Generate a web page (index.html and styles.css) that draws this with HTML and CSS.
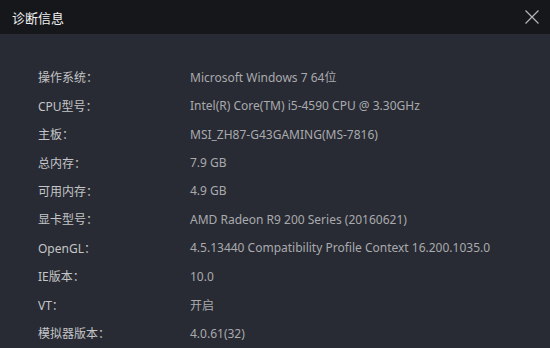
FILE: index.html
```html
<!DOCTYPE html>
<html lang="zh-CN">
<head>
<meta charset="utf-8">
<link rel="stylesheet" href="styles.css">
</head>
<body>
<div class="dialog">
  <div class="header">
    <span class="title">诊断信息</span>
    <svg class="close" width="14" height="14" viewBox="0 0 14 14"><path d="M0.5 0.5 L13.5 13.5 M13.5 0.5 L0.5 13.5" stroke="#b4b6bb" stroke-width="1.2" fill="none"/></svg>
  </div>
  <div class="content">
    <div class="row"><span class="label">操作系统：</span><span class="value">Microsoft Windows 7 64位</span></div>
    <div class="row"><span class="label">CPU型号：</span><span class="value">Intel(R) Core(TM) i5-4590 CPU @ 3.30GHz</span></div>
    <div class="row"><span class="label">主板：</span><span class="value">MSI_ZH87-G43GAMING(MS-7816)</span></div>
    <div class="row"><span class="label">总内存：</span><span class="value">7.9 GB</span></div>
    <div class="row"><span class="label">可用内存：</span><span class="value">4.9 GB</span></div>
    <div class="row"><span class="label">显卡型号：</span><span class="value">AMD Radeon R9 200 Series (20160621)</span></div>
    <div class="row"><span class="label">OpenGL：</span><span class="value">4.5.13440 Compatibility Profile Context 16.200.1035.0</span></div>
    <div class="row"><span class="label">IE版本：</span><span class="value">10.0</span></div>
    <div class="row"><span class="label">VT：</span><span class="value">开启</span></div>
    <div class="row"><span class="label">模拟器版本：</span><span class="value">4.0.61(32)</span></div>
  </div>
</div>
</body>
</html>
```

FILE: styles.css
```css
html, body {
  margin: 0;
  padding: 0;
  background: #282b33;
  overflow: hidden;
}
.dialog {
  width: 550px;
  height: 348px;
  font-family: "Noto Sans", "Noto Sans CJK SC", sans-serif;
}
.header {
  height: 34px;
  background: #16171b;
  display: flex;
  align-items: center;
  justify-content: space-between;
  padding: 0 11px 0 12px;
}
.title {
  color: #f0f0f0;
  font-size: 13px;
}
.content {
  padding: 29px 0 0 38px;
}
.row {
  display: flex;
  height: 28.44px;
  align-items: center;
  font-size: 12px;
}
.label {
  width: 152px;
  color: #c4c5c8;
}
.value {
  color: #a9aaae;
}
```
